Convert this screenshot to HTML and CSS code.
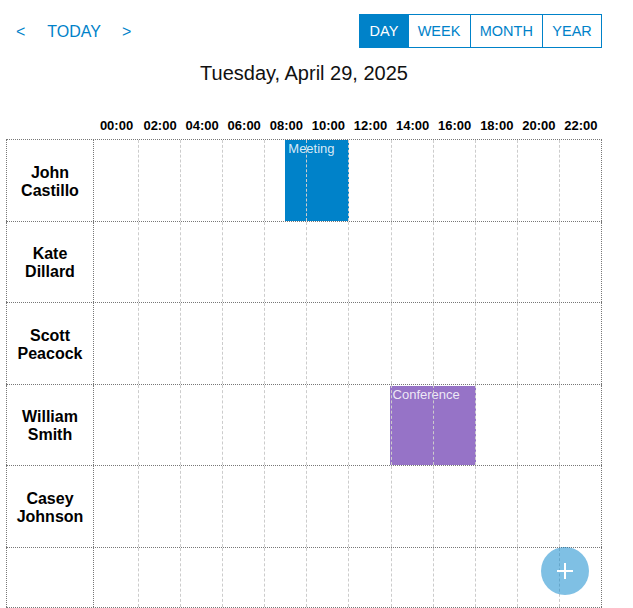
FILE: index.html
```html
<!DOCTYPE html>
<html lang="en">
<head>
    <meta charset="UTF-8">
    <meta name="viewport" content="width=device-width, initial-scale=1.0">
    <title>Scheduler - Day</title>
    <link rel="stylesheet" href="styles.css">
</head>
<body>
    <div class="scheduler">
        <div class="toolbar">
            <div class="nav">
                <button class="nav-btn prev">&lt;</button>
                <button class="nav-btn today">TODAY</button>
                <button class="nav-btn next">&gt;</button>
            </div>
            <div class="views">
                <button class="view-btn active">DAY</button>
                <button class="view-btn">WEEK</button>
                <button class="view-btn">MONTH</button>
                <button class="view-btn">YEAR</button>
            </div>
        </div>

        <h2 class="date-title">Tuesday, April 29, 2025</h2>

        <div class="hours">
            <div></div>
            <div>00:00</div>
            <div>02:00</div>
            <div>04:00</div>
            <div>06:00</div>
            <div>08:00</div>
            <div>10:00</div>
            <div>12:00</div>
            <div>14:00</div>
            <div>16:00</div>
            <div>18:00</div>
            <div>20:00</div>
            <div>22:00</div>
        </div>

        <div class="timeline">
            <div class="row">
                <div class="name">John<br>Castillo</div>
                <div class="event meeting" style="grid-column: 11 / 14;">Meeting</div>
                <div class="slots">
                    <div></div><div></div><div></div><div></div><div></div><div></div>
                    <div></div><div></div><div></div><div></div><div></div><div></div>
                </div>
            </div>
            <div class="row">
                <div class="name">Kate<br>Dillard</div>
                <div class="slots">
                    <div></div><div></div><div></div><div></div><div></div><div></div>
                    <div></div><div></div><div></div><div></div><div></div><div></div>
                </div>
            </div>
            <div class="row">
                <div class="name">Scott<br>Peacock</div>
                <div class="slots">
                    <div></div><div></div><div></div><div></div><div></div><div></div>
                    <div></div><div></div><div></div><div></div><div></div><div></div>
                </div>
            </div>
            <div class="row">
                <div class="name">William<br>Smith</div>
                <div class="event conference" style="grid-column: 16 / 20;">Conference</div>
                <div class="slots">
                    <div></div><div></div><div></div><div></div><div></div><div></div>
                    <div></div><div></div><div></div><div></div><div></div><div></div>
                </div>
            </div>
            <div class="row">
                <div class="name">Casey<br>Johnson</div>
                <div class="slots">
                    <div></div><div></div><div></div><div></div><div></div><div></div>
                    <div></div><div></div><div></div><div></div><div></div><div></div>
                </div>
            </div>
            <div class="row last">
                <div class="name"></div>
                <div class="slots">
                    <div></div><div></div><div></div><div></div><div></div><div></div>
                    <div></div><div></div><div></div><div></div><div></div><div></div>
                </div>
            </div>
        </div>
    </div>

    <button class="add-btn" aria-label="Add event">
        <svg width="16" height="16" viewBox="0 0 16 16">
            <path d="M8 0v16M0 8h16" stroke="#fff" stroke-width="2"/>
        </svg>
    </button>
</body>
</html>
```

FILE: styles.css
```css
body {
    font-family: "Liberation Sans", Arial, sans-serif;
    margin: 0;
    padding: 0;
    background-color: #fff;
    color: #000;
    overflow: hidden;
}

.scheduler {
    width: 596px;
    margin-left: 6px;
}

.toolbar {
    display: flex;
    justify-content: space-between;
    align-items: center;
    margin-top: 14px;
    height: 34px;
}

.nav {
    display: flex;
    align-items: center;
}

button {
    font-family: inherit;
    background: none;
    border: none;
    cursor: pointer;
}

.nav-btn {
    font-size: 16px;
    color: #0082c9;
    padding: 2px 10px 0;
    line-height: 34px;
}

.nav-btn.today {
    padding: 2px 12px 0;
}

.nav-btn.next {
    padding: 2px 9px 0;
}

.views {
    display: flex;
}

.view-btn {
    font-size: 14.5px;
    color: #0082c9;
    height: 34px;
    padding: 0 9.2px;
    border: 1px solid #0082c9;
    border-left: none;
    background-color: #fff;
}

.view-btn:first-child {
    border-left: 1px solid #0082c9;
}

.view-btn.active {
    background-color: #0082c9;
    color: #fff;
}

.date-title {
    margin: 14px 0 0;
    font-size: 20px;
    font-weight: normal;
    line-height: 23px;
    text-align: center;
    color: #111;
}

.hours {
    display: grid;
    grid-template-columns: 88px 45px repeat(11, 1fr);
    margin-top: 33px;
    padding-bottom: 6px;
    font-size: 13px;
    font-weight: bold;
    line-height: 15px;
    text-align: center;
}

.timeline {
    border-top: 1px dotted #777;
}

.row {
    display: grid;
    grid-template-columns: 88px 22.5px 22.5px repeat(22, 1fr);
    box-sizing: border-box;
    height: 81.5px;
    border-bottom: 1px dotted #777;
}

.row.last {
    height: 60px;
}

.name {
    grid-row: 1;
    grid-column: 1;
    display: flex;
    align-items: center;
    justify-content: center;
    padding-top: 3px;
    text-align: center;
    font-size: 16px;
    font-weight: bold;
    line-height: 18px;
    border-left: 1px dotted #777;
    border-right: 1px dotted #777;
}

.slots {
    grid-row: 1;
    grid-column: 2 / -1;
    display: grid;
    grid-template-columns: 45px repeat(11, 1fr);
    z-index: 1;
}

.slots div {
    border-right: 1px dashed #ccc;
}

.slots div:last-child {
    border-right: 1px dotted #777;
}

.event {
    grid-row: 1;
    font-size: 13px;
    line-height: 15px;
    padding: 1px 3px;
    color: rgba(255, 255, 255, 0.85);
    overflow: hidden;
    white-space: nowrap;
}

.event.meeting {
    background-color: #0082c9;
    margin-left: -1px;
}

.event.conference {
    background-color: #9673c7;
    margin: 1px 0 0 -2px;
}

.add-btn {
    position: fixed;
    right: 44px;
    bottom: 13px;
    width: 48px;
    height: 48px;
    border-radius: 50%;
    background-color: rgba(0, 130, 201, 0.5);
    display: flex;
    align-items: center;
    justify-content: center;
    padding: 0;
    z-index: 2;
}
```
